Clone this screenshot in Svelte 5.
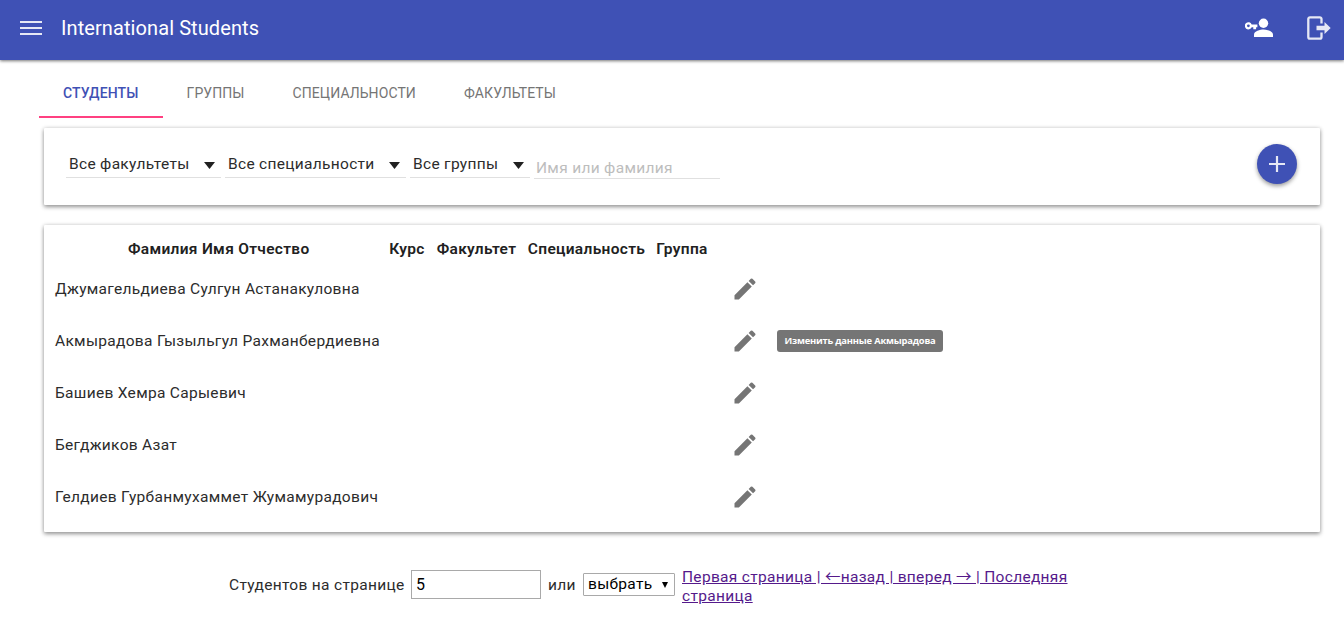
<script lang="ts">
  const tabs = ['Студенты', 'Группы', 'Специальности', 'Факультеты'];
  const filters = [
    { label: 'Все факультеты', width: 155 },
    { label: 'Все специальности', width: 181 },
    { label: 'Все группы', width: 120 },
  ];
  const students = [
    'Джумагельдиева Сулгун Астанакуловна',
    'Акмырадова Гызыльгул Рахманбердиевна',
    'Башиев Хемра Сарыевич',
    'Бегджиков Азат',
    'Гелдиев Гурбанмухаммет Жумамурадович',
  ];
  let active = $state(0);
  let perPage = $state('5');
</script>

<header>
  <svg class="menu" width="22" height="15" viewBox="0 0 22 15"><path d="M0 0h22v2H0zm0 6h22v2H0zm0 6h22v2H0z" fill="#e6e8f5" /></svg>
  <h1>International Students</h1>
  <svg class="account" width="30" height="22" viewBox="0 0 30 22" fill="#fff">
    <path d="M6.700 7.400A3.600 3.600 0 1 0 6.700 10.200H8.300v2.100h2.800v-2.100h1.300V7.400zM3.400 7.400a1.400 1.400 0 1 1 0 2.800 1.400 1.400 0 0 1 0-2.800z" />
    <circle cx="18.500" cy="6.200" r="4.700" />
    <path d="M9 20v-2.500c0-3.200 6.200-4.900 9.500-4.900s9.500 1.700 9.500 4.900V20z" />
  </svg>
  <svg class="exit" width="24" height="24" viewBox="0 0 24 24">
    <path d="M14.500 7.500V3a1.700 1.700 0 0 0-1.700-1.700H3A1.700 1.700 0 0 0 1.300 3v18A1.700 1.700 0 0 0 3 22.700h9.800a1.700 1.700 0 0 0 1.700-1.700v-4.500" fill="none" stroke="#e6e8f5" stroke-width="2.300" />
    <path d="M9.500 9.700h8V6l6.200 6-6.200 6v-3.700h-8z" fill="#e6e8f5" />
  </svg>
</header>

<nav>
  {#each tabs as tab, i}
    <button class:active={active === i} onclick={() => (active = i)}>{tab}</button>
  {/each}
</nav>

<section class="card filters">
  {#each filters as filter}
    <div class="filter" style="width: {filter.width}px">
      <span>{filter.label}</span>
      <svg width="11" height="7" viewBox="0 0 11 7"><path d="M0 0h11L5.500 7z" fill="#212121" /></svg>
    </div>
  {/each}
  <input class="search" placeholder="Имя или фамилия" />
  <button class="add" aria-label="Добавить">
    <svg width="18" height="18" viewBox="0 0 18 18"><path d="M9 1v16M1 9h16" stroke="#e6e8f5" stroke-width="2.200" /></svg>
  </button>
</section>

<section class="card students">
  <div class="row head">
    <b>Фамилия Имя Отчество</b><b>Курс</b><b>Факультет</b><b>Специальность</b><b>Группа</b>
  </div>
  {#each students as student, i}
    <div class="row">
      <span class="name">{student}</span>
      <span class="edit">
        <svg width="28" height="28" viewBox="0 0 24 24"><path d="M3 17.250V21h3.750L17.810 9.940l-3.750-3.750L3 17.250zM20.710 7.040a1 1 0 0 0 0-1.410l-2.340-2.340a1 1 0 0 0-1.410 0l-1.830 1.830 3.750 3.750 1.830-1.830z" fill="#757575" /></svg>
        {#if i === 1}<span class="tip">Изменить данные Акмырадова</span>{/if}
      </span>
    </div>
  {/each}
</section>

<footer>
  <span class="per">Студентов на странице</span>
  <input class="count" bind:value={perPage} />
  <span class="or">или</span>
  <div class="choose"><span>выбрать</span><svg width="6" height="6" viewBox="0 0 6 6"><path d="M0 0h6L3 6z" /></svg></div>
  <a href="#top">Первая страница | ←назад | вперед → | Последняя страница</a>
</footer>

<style>
  :global(body) { background: #fff; }
  :global(#app) { font: 15.500px/19px Roboto, "Noto Sans CJK JP", sans-serif; letter-spacing: .31px; color: #2c2c2c; }
  header, nav, .card, .filter, .row, footer, .choose { display: flex; box-sizing: border-box; }
  svg { display: block; flex: none; }
  button { border: 0; background: none; padding: 0; font: inherit; letter-spacing: inherit; }
  input { font: inherit; letter-spacing: inherit; box-sizing: border-box; outline: 0; border-radius: 0; }
  header { height: 60px; background: #3f51b5; color: #fff; align-items: center; padding: 0 13px 4px 20px; box-shadow: 0 1px 3px rgba(0,0,0,.55); }
  .menu { margin-top: 1px; }
  h1 { font-size: 20px; line-height: 24px; font-weight: 400; letter-spacing: .09px; margin: 0 auto 0 19px; }
  .account { margin-right: 32px; }
  nav { height: 58px; padding-left: 39px; }
  nav button { padding: 10px 24px 0; font-size: 14px; font-weight: 450; letter-spacing: .09px; text-transform: uppercase; color: #757575; border-bottom: 2px solid transparent; }
  nav button.active { color: #3f51b5; border-color: #ff4081; font-weight: 500; letter-spacing: .12px; }
  .card { background: #fff; box-shadow: 0 2px 4px rgba(0,0,0,.38), 0 0 4px rgba(0,0,0,.14); margin: 0 24px 0 44px; border-radius: 1px; }
  .filters { height: 77px; margin-top: 10px; padding: 16px 23px 0 22px; align-items: flex-start; gap: 4px; }
  .filter { height: 34px; border-bottom: 1px solid #e0e0e0; padding: 11px 6px 0 3px; justify-content: space-between; }
  .filter svg { margin-top: 7px; }
  .search { width: 186px; height: 26px; margin: 9px auto 0 0; border: 0; border-bottom: 1px solid #e0e0e0; padding: 4px 2px 0; }
  .search::placeholder { color: #bdbdbd; opacity: 1; }
  .add { width: 40px; height: 40px; border-radius: 50%; background: #3f51b5; display: grid; place-items: center; box-shadow: 0 2px 4px rgba(0,0,0,.4); }
  .students { margin-top: 20px; height: 307px; padding: 10px 11px; flex-direction: column; }
  .row { height: 52px; align-items: center; flex: none; }
  .head { height: 28px; display: grid; grid-template-columns: 323.500px 36px 82px 117px 53px; column-gap: 10.500px; color: #212121; }
  .head b { font-weight: 600; white-space: nowrap; display: flex; justify-content: center; }
  .head b:first-child { padding-left: 4px; }
  .name { width: 676px; }
  .edit { position: relative; }
  .tip { position: absolute; left: 46px; top: 3px; background: #757575; color: #fff; border-radius: 3px; width: 166px; text-align: center; font: 700 9.400px/22px "Open Sans", sans-serif; letter-spacing: -.2px; white-space: nowrap; }
  footer { margin-top: 38px; padding-left: 229px; height: 44px; align-items: flex-start; }
  .per, .or { margin-top: 6px; white-space: nowrap; }
  .per { width: 182px; }
  .count { width: 130px; height: 29px; border: 1px solid #a9a9a9; padding: 0 4px; margin-right: 7px; color: #000; font-size: 16px; }
  .or { width: 35px; }
  .choose { width: 92px; height: 23px; margin: 3px 7px 0 0; border: 1px solid #a9a9a9; align-items: center; justify-content: space-between; padding: 0 6px 0 4px; color: #000; border-radius: 1px; }
  footer a { width: 390px; margin-top: -2px; color: #551a8b; text-decoration: underline; }
</style>
